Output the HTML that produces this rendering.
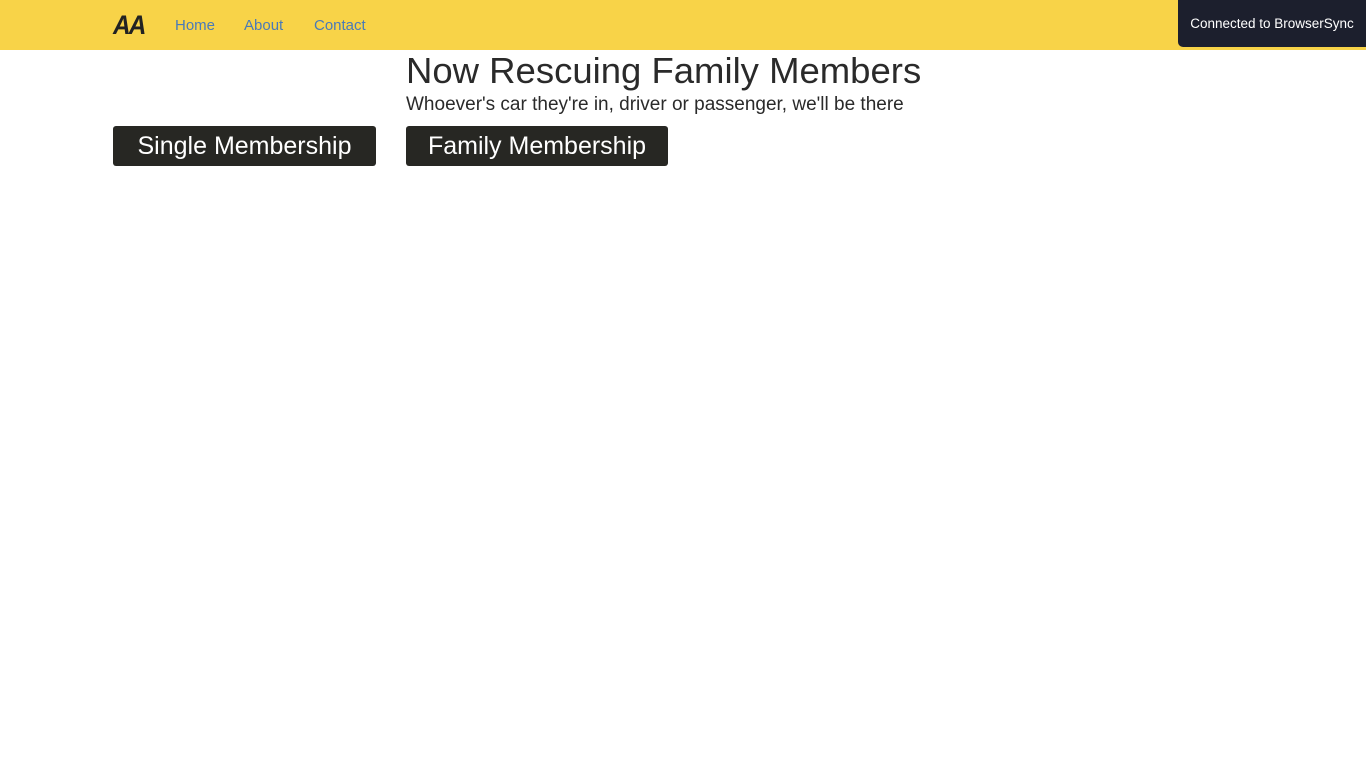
<!DOCTYPE html>
<html><head><style>
body{margin:0;width:1366px;height:768px;background:#fff;font-family:"Liberation Sans",sans-serif;position:relative;overflow:hidden}
.nav{position:absolute;left:0;top:0;width:1366px;height:50px;background:#f8d348}
.logo{position:absolute;left:113px;top:11px;font-weight:bold;font-style:italic;font-size:27px;color:#222;letter-spacing:-2px;line-height:28px;transform:scaleX(0.9);transform-origin:left}
.nav a{position:absolute;top:17px;font-size:15px;color:#4a7ab8;text-decoration:none}
.bs{position:absolute;left:1178px;top:0;width:188px;height:47px;background:#1c1f2d;color:#fff;font-size:13.5px;line-height:48px;text-align:center;border-bottom-left-radius:5px}
h1{position:absolute;left:406px;top:50px;margin:0;font-weight:normal;font-size:36.5px;color:#2a2a2a;line-height:42px}
p{position:absolute;left:406px;top:94px;margin:0;font-size:19px;color:#2a2a2a;line-height:22px}
.btn{position:absolute;top:126px;height:40px;background:#272723;color:#fff;border-radius:3px;font-size:25px;line-height:41px;text-align:center}
</style></head><body>
<div class="nav">
<div class="logo">AA</div>
<a style="left:175px">Home</a><a style="left:244px">About</a><a style="left:314px">Contact</a>
</div>
<div class="bs">Connected to BrowserSync</div>
<h1>Now Rescuing Family Members</h1>
<p>Whoever's car they're in, driver or passenger, we'll be there</p>
<div class="btn" style="left:113px;width:263px">Single Membership</div>
<div class="btn" style="left:406px;width:262px">Family Membership</div>
</body></html>
